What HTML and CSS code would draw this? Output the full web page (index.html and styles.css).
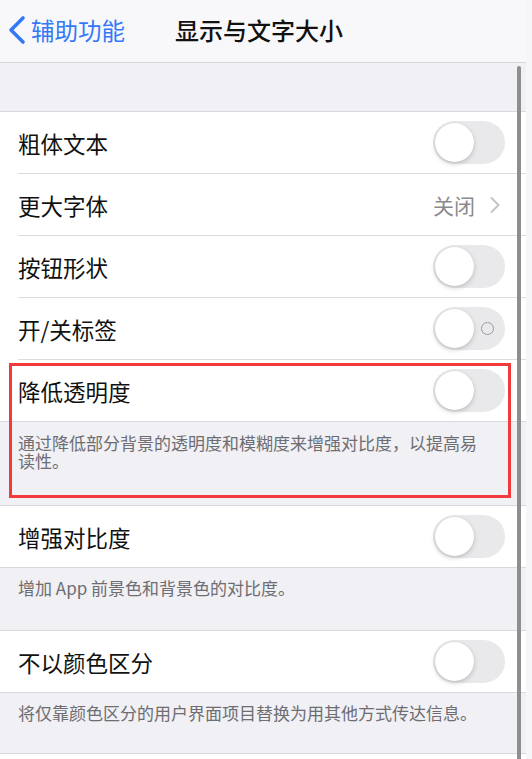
FILE: index.html
```html
<!DOCTYPE html>
<html lang="zh-CN">
<head>
<meta charset="utf-8">
<link rel="stylesheet" href="styles.css">
</head>
<body>
<div class="screen">
  <header class="nav">
    <div class="back">
      <svg class="chev" width="20" height="30" viewBox="0 0 20 30"><path d="M16 3 L4 15 L16 27" fill="none" stroke="#3478f6" stroke-width="3.6" stroke-linecap="round" stroke-linejoin="round"/></svg>
      <span class="back-text">辅助功能</span>
    </div>
    <div class="title">显示与文字大小</div>
  </header>
  <main class="content">
    <div class="spacer"></div>
    <section class="group">
      <div class="row"><span class="label">粗体文本</span><span class="toggle"><span class="knob"></span></span></div>
      <div class="row"><span class="label">更大字体</span><span class="detail">关闭<svg class="disc" width="12" height="18" viewBox="0 0 12 18"><path d="M2.5 2 L9.5 9 L2.5 16" fill="none" stroke="#c4c4c8" stroke-width="2" stroke-linecap="round" stroke-linejoin="round"/></svg></span></div>
      <div class="row"><span class="label">按钮形状</span><span class="toggle"><span class="knob"></span></span></div>
      <div class="row"><span class="label">开/关标签</span><span class="toggle"><span class="knob"></span><span class="ring"></span></span></div>
      <div class="row"><span class="label">降低透明度</span><span class="toggle"><span class="knob"></span></span></div>
    </section>
    <div class="footer footer-tall">通过降低部分背景的透明度和模糊度来增强对比度，以提高易读性。</div>
    <section class="group">
      <div class="row"><span class="label">增强对比度</span><span class="toggle"><span class="knob"></span></span></div>
    </section>
    <div class="footer">增加 App 前景色和背景色的对比度。</div>
    <section class="group">
      <div class="row"><span class="label">不以颜色区分</span><span class="toggle"><span class="knob"></span></span></div>
    </section>
    <div class="footer footer-short">将仅靠颜色区分的用户界面项目替换为用其他方式传达信息。</div>
    <section class="group">
      <div class="row"></div>
    </section>
  </main>
  <div class="highlight"></div>
  <div class="scrollbar"></div>
</div>
</body>
</html>
```
FILE: styles.css
```css
* { box-sizing: border-box; }
html, body { margin: 0; padding: 0; }
body {
  width: 532px;
  height: 759px;
  overflow: hidden;
  background: #f6f6f8;
  font-family: "Noto Sans CJK SC", "Noto Sans", sans-serif;
}
.screen {
  position: relative;
  width: 532px;
  height: 759px;
  overflow: hidden;
}
.nav {
  height: 63px;
  background: #f8f8fa;
  border-bottom: 1px solid #d6d6da;
  display: flex;
  align-items: center;
  position: relative;
  width: 526px;
}
.back {
  display: flex;
  align-items: center;
  padding-left: 7px;
  gap: 4px;
  margin-top: -2px;
}
.chev { display: block; }
.back-text {
  color: #3478f6;
  font-size: 23.5px;
  line-height: 30px;
}
.title {
  margin-left: 50px;
  font-size: 24px;
  font-weight: 500;
  color: #111;
  line-height: 30px;
  margin-top: -2px;
}
.content {
  width: 526px;
  background: #f0f0f5;
}
.spacer { height: 48px; }
.group {
  background: #fff;
  border-top: 1px solid #d9d9dd;
  border-bottom: 1px solid #d9d9dd;
}
.row {
  height: 62px;
  margin-left: 18px;
  padding-right: 21px;
  display: flex;
  align-items: center;
  justify-content: space-between;
  border-bottom: 1px solid #dcdce0;
}
.row:last-child { border-bottom: none; height: 61px; }
.label {
  font-size: 22.5px;
  color: #111;
  line-height: 30px;
}
.toggle {
  position: relative;
  width: 72px;
  height: 43px;
  border-radius: 22px;
  background: #e9e9eb;
  display: block;
}
.knob {
  position: absolute;
  left: 2px;
  top: 2px;
  width: 39px;
  height: 39px;
  border-radius: 50%;
  background: #fff;
  box-shadow: 0 2px 5px rgba(0,0,0,0.18), 0 0 1px rgba(0,0,0,0.12);
}
.ring {
  position: absolute;
  left: 48px;
  top: 15px;
  width: 13px;
  height: 13px;
  border-radius: 50%;
  border: 1.5px solid #9a9a9e;
}
.detail {
  display: flex;
  align-items: center;
  gap: 14px;
  font-size: 21px;
  color: #8a8a8e;
  line-height: 30px;
  padding-right: 4px;
}
.disc { display: block; }
.footer {
  height: 62px;
  padding: 11px 18px 0 18px;
  font-size: 17px;
  line-height: 18px;
  color: #6d6d72;
}
.footer-tall { height: 83px; padding-top: 12px; padding-right: 46px; }
.footer-short { height: 60px; }
.highlight {
  position: absolute;
  left: 9px;
  top: 363px;
  width: 502px;
  height: 135px;
  border: 3px solid #f23a3c;
}
.scrollbar {
  position: absolute;
  left: 517px;
  top: 66px;
  width: 4px;
  height: 700px;
  border-radius: 2px;
  background: #8e8e91;
}
```
